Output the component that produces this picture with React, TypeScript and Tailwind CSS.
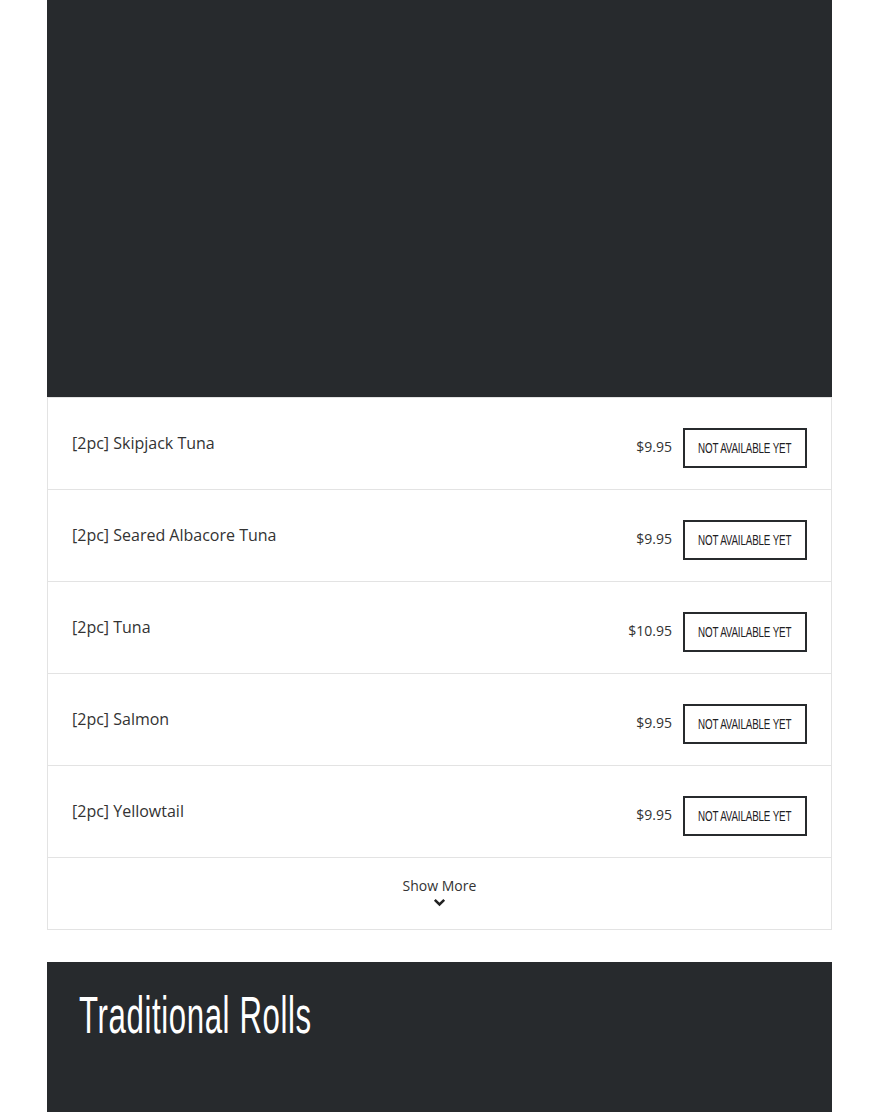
import React from "react";

const items = [
  { name: "[2pc] Skipjack Tuna", price: "$9.95" },
  { name: "[2pc] Seared Albacore Tuna", price: "$9.95" },
  { name: "[2pc] Tuna", price: "$10.95" },
  { name: "[2pc] Salmon", price: "$9.95" },
  { name: "[2pc] Yellowtail", price: "$9.95" },
];

const open = { fontFamily: '"Open Sans", "Noto Sans", sans-serif' };
const narrow = { fontFamily: '"Liberation Sans", Arial, sans-serif' };

export default function App() {
  return (
    <div className="w-[870px] min-h-[1112px] bg-white overflow-hidden" style={open}>
      <div className="ml-[47px] w-[785px]">
        <div className="h-[397px] bg-[#272a2d]" />
        <div className="border-l border-r border-t border-[#e3e3e3]">
          {items.map((it) => (
            <div
              key={it.name}
              className="h-[92px] border-b border-[#e3e3e3] flex items-center justify-between pl-[24px] pr-[24px] pt-[9px]"
            >
              <div className="text-[16px] text-[#333] leading-[22px] -mt-[10px]">{it.name}</div>
              <div className="flex items-center">
                <span className="text-[14px] text-[#333] mr-[11px] -mt-[3px]">{it.price}</span>
                <div className="w-[124px] h-[40px] border-2 border-[#272a2d] flex items-center justify-center overflow-hidden">
                  <span
                    className="inline-block whitespace-nowrap text-[14px] leading-[14px] font-medium text-[#1e2023] scale-x-[0.7] tracking-[-0.2px]"
                    style={narrow}
                  >
                    NOT AVAILABLE YET
                  </span>
                </div>
              </div>
            </div>
          ))}
          <div className="h-[72px] border-b border-[#e3e3e3] flex flex-col items-center pt-[19px]">
            <span className="text-[14px] text-[#333] leading-[18px]">Show More</span>
            <svg width="13" height="9" viewBox="0 0 13 9" className="mt-[3px]">
              <path d="M1.8 1.8 L6.5 6.5 L11.2 1.8" fill="none" stroke="#222" strokeWidth="2.5" />
            </svg>
          </div>
        </div>
        <div className="mt-[32px] h-[160px] bg-[#272a2d] pl-[32px] pt-[23px]">
          <h2
            className="text-white text-[52px] leading-[60px] font-medium whitespace-nowrap inline-block origin-left scale-x-[0.6] tracking-[1px]"
            style={narrow}
          >
            Traditional Rolls
          </h2>
        </div>
      </div>
    </div>
  );
}
